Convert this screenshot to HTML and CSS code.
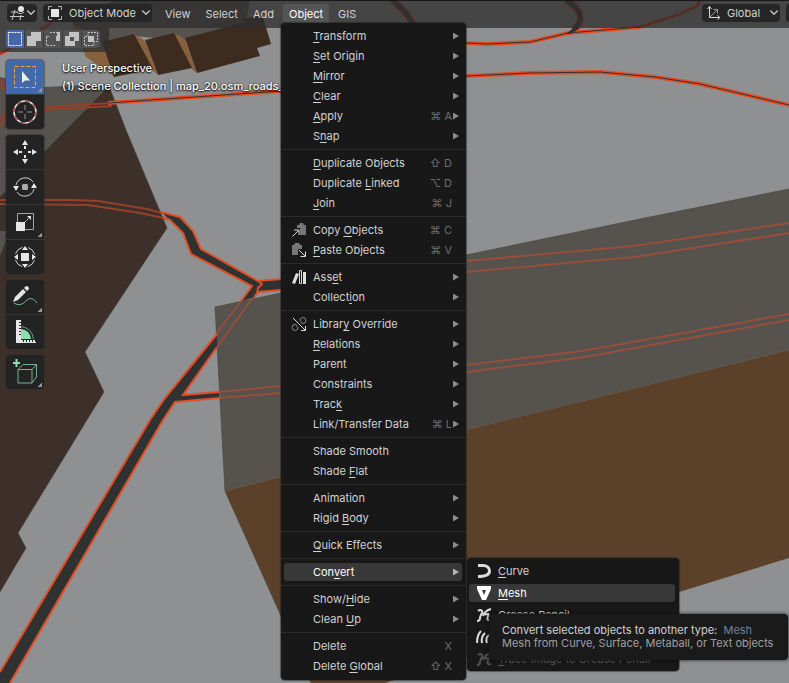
FILE: index.html
```html
<!DOCTYPE html>
<html lang="en">
<head>
<meta charset="utf-8">
<title>3D Viewport</title>
<link rel="stylesheet" href="styles.css">
</head>
<body>
<svg class="scene" viewBox="0 0 789 683" preserveAspectRatio="xMinYMin slice" aria-hidden="true">
  <!-- buildings -->
  <path fill="#56524d" d="M0 77 44 87 109 84V90L0 200ZM72 23 115 0H250L246 22 185 41 134 36 103 46Z"/>
  <path fill="#3d302a" d="M109 86 126 130 167 228 85 352 104 392 18 533 26 548 0 592V197Z"/>
  <path fill="#56524d" d="M0 231H10L0 256Z"/>
  <path fill="#87603c" d="M72 23 103 42 116 77 86 57ZM134 34 145 41 158 75 150 68ZM174 33 185 39 197 73 189 67Z"/>
  <path fill="#3d2b20" d="M102 42 134 34 153 69 114 77ZM145 40 174 33 192 68 158 75ZM185 38 246 22 240 20 262 14 271 44 257 48 260 56 197 73Z"/>
  <path fill="#56524d" d="M215 307 281 293 466 255 640 219 789 189V350L466 430 225 491Z"/>
  <path fill="#5c412a" d="M225 491 466 430 789 350V558L385 683H311L281 616Z"/>
  <path fill="none" stroke="#454340" stroke-opacity=".6" d="M225 491 215 307 281 293 466 255 640 219 789 189M225 491 281 616 311 683M109 86 126 130 167 228 85 352 104 392 18 533 26 548 0 592"/>
  <!-- roads seen through buildings -->
  <g fill="none" stroke="#a34e3b" stroke-width="2">
    <path d="M466 261 634 246 789 223M466 272 634 257 789 233M466 365 582 351 789 314M466 372 585 357 789 320" opacity=".85"/>
    <path d="M219 392 281 386M219 398 281 393M241 301 216 334M254 296 217 347" opacity=".85"/>
  </g>
  <g fill="none" stroke="#963f29" stroke-width="2">
    <path d="M0 200H75L98 201 147 209 162 213M0 204 88 205 140 213 168 219"/>
    <path d="M44 107 112 103M44 110 112 106M0 80 6 86M0 85 6 91M0 120 6 112M0 126 6 118"/>
  </g>
  <!-- road surfaces -->
  <path fill="#303232" d="M161 212 180 217 193 231 201 249 258 281 281 279V290L258 292 255 297 242 301 252 287 191 254 183 233 170 220Z"/>
  <path fill="#303232" d="M217 334 165 398 150 420 0 672V683H10L163 420 175 402 219 398V392L183 395 217 347Z"/>
  <g fill="none" stroke="#e34d26" stroke-width="2">
    <path d="M161 212 180 217 193 231 201 249 258 281 281 279M163 217 170 220 183 233 191 254 252 286 241 301M254 297 258 292 281 290M258 281 262 284 258 288 257 293"/>
    <path d="M217 334 165 398 150 420 0 672M10 683 163 420 175 402 219 398M219 392 183 395 217 347"/>
  </g>
  <g fill="none" stroke="#e34d26" stroke-width="4">
    <path d="M108 103 281 91M466 76 530 73 600 72 655 77 700 84 789 105M466 43 487 44 530 42 568 33 640 27 680 14 697 6 700 0M0 54 20 42 47 26 62 14"/>
  </g>
  <path fill="none" stroke="#e34d26" stroke-width="8" d="M392 0C400 7 410 14 414 28M566 0C580 8 586 20 574 29"/>
  <path fill="none" stroke="#303232" stroke-width="5" d="M392 0C400 7 410 14 414 28M566 0C580 8 586 20 573 30"/>
  <path fill="#303232" d="M566 34 576 26 580 28 570 34Z"/>
  <g fill="none" stroke="#303232">
    <path d="M108 103 281 91M466 76 530 73 600 72 655 77 700 84 789 105M466 43 487 44 530 42 568 33 640 27 680 14 697 6 700 0M0 54 20 42 47 26 62 14"/>
  </g>
</svg>

<header class="topbar">
  <button class="field editor" aria-label="Editor type">
    <svg width="16" height="16" viewBox="0 0 16 16" fill="none" stroke="#c8c8c8" stroke-width="1"><path d="M1 7H8M0 11.500H14M5 5 2 15M11 10 10 15"/><circle cx="11" cy="4" r="3" fill="#e6e6e6" stroke="none"/><path d="M7 7C8 9 12 9 14 7"/></svg>
    <svg class="chev" viewBox="0 0 8 8"><path d="M1 2 4 5 7 2"/></svg>
  </button>
  <label class="field mode">
    <svg width="16" height="16" viewBox="0 0 16 16" fill="none" stroke="#b4b4b4"><path d="M1.500 5V1.500H5M11 1.500H14.500V5M14.500 11V14.500H11M5 14.500H1.500V11"/><path d="M4 4H12V12H4Z" fill="#e6e6e6" stroke="none"/></svg>
    <select aria-label="Mode"><option>Object Mode</option></select>
    <svg class="chev" viewBox="0 0 8 8"><path d="M1 2 4 5 7 2"/></svg>
  </label>
  <nav class="menubar">
    <button>View</button>
    <button>Select</button>
    <button>Add</button>
    <div class="open">
      <button class="active" aria-expanded="true">Object</button>
      <ul class="menu main">
        <li><button><span class="t"><u>T</u>ransform</span><i class="arrow"></i></button></li>
        <li><button><span class="t"><u>S</u>et Origin</span><i class="arrow"></i></button></li>
        <li><button><span class="t"><u>M</u>irror</span><i class="arrow"></i></button></li>
        <li><button><span class="t"><u>C</u>lear</span><i class="arrow"></i></button></li>
        <li><button><span class="t"><u>A</u>pply</span><kbd>⌘ A</kbd><i class="arrow"></i></button></li>
        <li><button><span class="t">S<u>n</u>ap</span><i class="arrow"></i></button></li>
        <li class="sep"></li>
        <li><button><span class="t"><u>D</u>uplicate Objects</span><kbd>⇧ D</kbd></button></li>
        <li><button><span class="t">Duplicate <u>L</u>inked</span><kbd>⌥ D</kbd></button></li>
        <li><button><span class="t"><u>J</u>oin</span><kbd>⌘ J</kbd></button></li>
        <li class="sep"></li>
        <li><button><svg class="ic" viewBox="0 0 14 14"><path fill="#777" d="M5 2H7L8 0H11L12 2H14V12H8V5H5Z"/><path fill="none" stroke="#dcdcdc" d="M0.500 13.500 6.500 7.500M2 7H7V12"/></svg><span class="t">Copy <u>O</u>bjects</span><kbd>⌘ C</kbd></button></li>
        <li><button><svg class="ic" viewBox="0 0 14 14"><path fill="#777" d="M0 2H2L3 0H7L8 2H10V6H6V12H0Z"/><path fill="none" stroke="#dcdcdc" d="M7 7 13 13M8.500 13.500H13.500V8.500"/></svg><span class="t"><u>P</u>aste Objects</span><kbd>⌘ V</kbd></button></li>
        <li class="sep"></li>
        <li><button><svg class="ic" viewBox="0 0 14 14"><path fill="#dcdcdc" d="M4 3 7 4 3 14 0 13ZM11 2H14V14H11Z"/><path fill="none" stroke="#dcdcdc" d="M7.500 .500H9.500V13.500H7.500Z"/></svg><span class="t">Ass<u>e</u>t</span><i class="arrow"></i></button></li>
        <li><button><span class="t">Collect<u>i</u>on</span><i class="arrow"></i></button></li>
        <li class="sep"></li>
        <li><button><svg class="ic" viewBox="0 0 14 14"><g fill="none" stroke="#8c8c8c"><path d="M8 4A3 3 0 1 1 11 6.500C9 6.500 8.500 5 10 4M6 10A3 3 0 1 1 3 7.500C5 7.500 5.500 9 4 10"/></g><path fill="none" stroke="#dcdcdc" d="M1 1 13 13M9 13.500H13.500V9"/></svg><span class="t">Librar<u>y</u> Override</span><i class="arrow"></i></button></li>
        <li><button><span class="t"><u>R</u>elations</span><i class="arrow"></i></button></li>
        <li><button><span class="t">Parent</span><i class="arrow"></i></button></li>
        <li><button><span class="t">Constraints</span><i class="arrow"></i></button></li>
        <li><button><span class="t">Trac<u>k</u></span><i class="arrow"></i></button></li>
        <li><button><span class="t">Link/Transfer Data</span><kbd>⌘ L</kbd><i class="arrow"></i></button></li>
        <li class="sep"></li>
        <li><button><span class="t">Shade Smooth</span></button></li>
        <li><button><span class="t">Shade <u>F</u>lat</span></button></li>
        <li class="sep"></li>
        <li><button><span class="t">Animation</span><i class="arrow"></i></button></li>
        <li><button><span class="t">Rigid <u>B</u>ody</span><i class="arrow"></i></button></li>
        <li class="sep"></li>
        <li><button><span class="t"><u>Q</u>uick Effects</span><i class="arrow"></i></button></li>
        <li class="sep"></li>
        <li class="parent"><button class="hot"><span class="t">Con<u>v</u>ert</span><i class="arrow"></i></button>
          <ul class="menu sub">
            <li><button><svg class="ic" viewBox="0 0 14 14"><path fill="none" stroke="#dcdcdc" stroke-width="3" d="M1 1.500H6C10 1.500 12.500 4 12.500 7 12.500 11 9 12.500 1 12.500"/></svg><span class="t"><u>C</u>urve</span></button></li>
            <li class="parent"><button class="hot"><svg class="ic" viewBox="0 0 14 14"><path fill="#fff" fill-rule="evenodd" d="M0 0H14V3L9 14H5L0 3ZM5 4 7 9 9 4Z"/></svg><span class="t"><u>M</u>esh</span></button>
              <div class="tip" role="tooltip">
                <p>Convert selected objects to another type: &nbsp;<b>Mesh</b></p>
                <p class="desc">Mesh from Curve, Surface, Metaball, or Text objects</p>
              </div>
            </li>
            <li><button><svg class="ic" viewBox="0 0 14 14"><path fill="none" stroke="#dcdcdc" stroke-width="2" d="M1 3C3 1 6 2 5 5 4 7 3 8 3 10 3 12 2 13 0 13M6 8C7 5 10 2 14 1M8 7C11 5 12 6 11 8 10 11 10 13 14 12"/></svg><span class="t"><u>G</u>rease Pencil</span></button></li>
            <li><button aria-label="Curves"><svg class="ic" viewBox="0 0 14 14"><path fill="none" stroke="#dcdcdc" stroke-width="2" d="M4 1C1 4 0 8 0 13M8 3C5 6 4 9 5 13M12 5C9 7 9 10 10 13"/></svg></button></li>
            <li><button disabled><svg class="ic" viewBox="0 0 14 14"><path fill="none" stroke="#505050" stroke-width="2" d="M1 3C3 1 6 2 5 5 4 7 3 8 3 10 3 12 2 13 0 13M6 8C7 5 10 2 14 1M8 7C11 5 12 6 11 8 10 11 10 13 14 12"/></svg><span class="t"><u>T</u>race Image to Grease Pencil</span></button></li>
          </ul>
        </li>
        <li class="sep"></li>
        <li><button><span class="t">Show/<u>H</u>ide</span><i class="arrow"></i></button></li>
        <li><button><span class="t">Clean <u>U</u>p</span><i class="arrow"></i></button></li>
        <li class="sep"></li>
        <li><button><span class="t">Delete</span><kbd>X</kbd></button></li>
        <li><button><span class="t">Delete <u>G</u>lobal</span><kbd>⇧ X</kbd></button></li>
      </ul>
    </div>
    <button>GIS</button>
  </nav>
  <label class="field orient">
    <svg width="16" height="16" viewBox="0 0 16 16" fill="none" stroke="#dcdcdc"><path d="M3.500 2V12.500H13M1.500 4 3.500 1.500 5.500 4M11.500 10.500 14 12.500 11.500 14.500"/><path stroke="#999" d="M4 12 11 5M7.500 4.500H11.500V8.500"/></svg>
    <select aria-label="Transform orientation"><option>Global</option></select>
    <svg class="chev" viewBox="0 0 8 8"><path d="M1 2 4 5 7 2"/></svg>
  </label>
  <button class="field edge" aria-label="Pivot point"></button>
</header>

<div class="modes">
  <div class="group">
    <button class="on" aria-label="Set selection"><svg viewBox="0 0 16 16"><path fill="none" stroke="#fff" stroke-dasharray="2 1" d="M1.500 1.500H14.500V14.500H1.500Z"/></svg></button>
    <button aria-label="Extend selection"><svg viewBox="0 0 16 16"><path fill="#c2c2c2" d="M5 1H15V10H10V15H1V5H5Z"/></svg></button>
    <button aria-label="Subtract selection"><svg viewBox="0 0 16 16"><path fill="none" stroke="#c2c2c2" stroke-dasharray="2 1" d="M5 1.500H14.500M1.500 6V14.500H10M1.500 5.500H5"/><path fill="#c2c2c2" d="M12 1H15V10H11V5H12Z"/></svg></button>
    <button aria-label="Invert selection"><svg viewBox="0 0 16 16"><path fill="#c2c2c2" fill-rule="evenodd" d="M5 1H15V10H11V15H1V5H5ZM6 6V10H10V6Z"/></svg></button>
    <button aria-label="Intersect selection"><svg viewBox="0 0 16 16"><path fill="none" stroke="#c2c2c2" stroke-dasharray="2 1" d="M5 1.500H14.500V10.500H11V14.500H1.500V5.500H5Z"/><path fill="#c2c2c2" d="M5 5H11V11H5Z"/></svg></button>
  </div>
</div>

<main class="view">
  <aside class="tools">
    <div class="group">
      <button class="on more" aria-label="Select box"><svg viewBox="0 0 24 24"><path fill="none" stroke="#f5a531" stroke-width="1" stroke-dasharray="4 2" d="M1.500 1.500H22.500V22.500H1.500Z"/><path fill="#ededed" d="M9 6V18L12 15.500 17 15.500Z"/></svg></button>
      <button aria-label="Cursor"><svg viewBox="0 0 24 24"><circle cx="12" cy="12" r="11" fill="none" stroke="#e6e6e6" stroke-width="1.500"/><circle cx="12" cy="12" r="11" fill="none" stroke="#a8464b" stroke-width="1.500" stroke-dasharray="4.600 4"/><path stroke="#969696" d="M12 5V10M12 14V19M5 12H10M14 12H19"/></svg></button>
    </div>
    <div class="group">
      <button aria-label="Move"><svg viewBox="0 0 24 24"><path fill="#e6e6e6" d="M12 0 15 5H9ZM12 24 9 19H15ZM0 12 5 9V15ZM24 12 19 15V9Z"/><path stroke="#e6e6e6" stroke-width="2" d="M12 6V9M12 15V18M6 12H9M15 12H18"/></svg></button>
      <button aria-label="Rotate"><svg viewBox="0 0 24 24"><path fill="none" stroke="#d2d2d2" stroke-width="1" d="M3 10A9.500 9.500 0 0 1 20 7M21 14A9.500 9.500 0 0 1 4 17"/><path fill="#e6e6e6" d="M0 11H6L3 16ZM18 13H24L21 8Z"/><path fill="#aaa" d="M10 9H14L15 10V14L14 15H10L9 14V10Z"/></svg></button>
      <button class="more" aria-label="Scale"><svg viewBox="0 0 24 24"><path fill="none" stroke="#a5a5a5" stroke-width="1" d="M4.500 12V3.500H20.500V19.500H12"/><path fill="#e6e6e6" d="M3 12H12V21H3ZM18 6V10L14 6Z"/><path stroke="#e6e6e6" stroke-dasharray="2 1" d="M12 12 17 7"/></svg></button>
      <button aria-label="Transform"><svg viewBox="0 0 24 24"><circle cx="12" cy="12" r="10" fill="none" stroke="#d2d2d2" stroke-width="1" stroke-dasharray="9.700 6" stroke-dashoffset="-3"/><path fill="#e6e6e6" d="M8 8H16V16H8ZM12 1 15 5H9ZM12 23 9 19H15ZM1 12 5 9V15ZM23 12 19 15V9Z"/></svg></button>
    </div>
    <div class="group">
      <button class="more" aria-label="Annotate"><svg viewBox="0 0 24 24"><path fill="#e6e6e6" d="M0 17 2 12 10 4 13 7 5 15ZM11 3 13 1Q16 1 16 4L14 6Z"/><path fill="none" stroke="#70bd96" stroke-width="1" d="M1 18C7 22 11 18 14 15 18 12 21 14 24 18"/></svg></button>
      <button aria-label="Measure"><svg viewBox="0 0 24 24"><path fill="#8edcb1" d="M8 9Q17 10 18 19H8Z"/><path fill="none" stroke="#5fa57d" d="M8 6.500Q19 8 20.500 19"/><path fill="#e6e6e6" d="M3 0H8V2H6V3H8V5H6V6H8V8H6V9H8V11H6V12H8V14H6V15H8V20H10V22H11V20H13V22H14V20H16V22H17V20H19V22H20V20H22V22H23V23H3Z"/></svg></button>
    </div>
    <div class="group">
      <button class="more" aria-label="Add cube"><svg viewBox="0 0 24 24"><path fill="none" stroke="#72b291" d="M5 9.500H19V23H5ZM5 9.500 10 4.500H23.500L19 9.500M23.500 4.500V17L19 23"/><path stroke="#8edcb1" stroke-width="2" d="M0 3H7M3.500 -1V7"/></svg></button>
    </div>
  </aside>
  <div class="info">
    <p>User Perspective</p>
    <p>(1) Scene Collection | map_20.osm_roads_</p>
  </div>
</main>
</body>
</html>
```

FILE: styles.css
```css
* { box-sizing: border-box; }

body {
  margin: 0;
  min-height: 100vh;
  overflow: hidden;
  background: #8e9092;
  color: #d2d2d2;
  font: 11px/18px Inter, "Noto Sans", sans-serif;
}

button, select {
  margin: 0;
  padding: 0;
  border: 0;
  background: none;
  color: inherit;
  font: inherit;
}

ul, p { margin: 0; padding: 0; list-style: none; }
svg { display: block; flex: none; overflow: visible; }

.scene {
  position: absolute;
  inset: 0;
  width: 100%;
  height: 100vh;
  overflow: hidden;
}

/* header */
.topbar {
  position: relative;
  z-index: 2;
  display: flex;
  align-items: flex-start;
  height: 28px;
  padding: 3px 0 0 7px;
  border-top: 1px solid #18181a;
  background: rgba(46, 46, 46, .76);
}

.field {
  display: flex;
  align-items: center;
  height: 18px;
  border-radius: 4px;
  background: #262626;
}
.field select { appearance: none; outline: 0; }

.chev {
  width: 10px;
  height: 10px;
  fill: none;
  stroke: #c8c8c8;
}

.editor { width: 30px; padding: 0 1px 0 3px; }
.mode { margin-left: 6px; padding: 0 1px 0 4px; gap: 6px; width: 109px; }
.orient { margin-left: auto; padding: 0 1px 0 4px; gap: 5px; width: 78px; }
.mode select, .orient select { flex: 1; min-width: 0; margin-right: -4px; }
.edge { width: 3px; margin-left: 6px; border-radius: 4px 0 0 4px; }

.menubar { display: flex; margin-left: 7px; }
.menubar > button, .open > button {
  height: 19px;
  padding: 0 6px;
  margin-right: 3px;
}
.menubar .active {
  background: #555;
  color: #fff;
  border-radius: 3px 3px 0 0;
}
.open { position: relative; }

/* menus */
.menu {
  position: absolute;
  padding: 3px 0 4px;
  border-radius: 4px;
  background: #181818;
  box-shadow: 0 0 1px 1px rgba(30, 30, 30, .5);
}
.main { top: 19px; left: -2px; width: 185px; }

.menu button {
  display: flex;
  align-items: center;
  width: calc(100% - 7px);
  height: 18px;
  margin: 1px 4px 1px 3px;
  padding-left: 29px;
  border-radius: 3px;
  white-space: nowrap;
  text-align: left;
}
.menu li { display: flow-root; }
.menu .ic { width: 14px; height: 14px; margin: 0 7px 0 -21px; }
.menu .t { flex: 1; }
.menu .hot { background: #383838; color: #fff; }
.menu button:disabled { color: #5a5a5a; }
.menu u { text-underline-offset: 2px; text-decoration-thickness: 1px; text-decoration-skip-ink: none; }

.menu .sep { height: 7px; padding: 3px 0; background: #2b2b2b content-box; }

kbd { margin-right: 10px; color: #6e6e6e; font: inherit; }
kbd:has(+ .arrow) { margin-right: 1px; }

.arrow {
  width: 6px;
  height: 7px;
  margin-right: 3px;
  background: #8c8c8c;
  clip-path: polygon(0 0, 100% 50%, 0 100%);
}
.hot .arrow { background: #b4b4b4; }

.parent { position: relative; }
.menu.sub { top: -4px; left: 186px; width: 212px; padding: 2px 0 1px; }
.sub button { margin: 2px 4px 2px 2px; width: calc(100% - 6px); }

.tip {
  position: absolute;
  top: 32px;
  left: 22px;
  padding: 10px 15px 10px 13px;
  border-radius: 4px;
  background: #1a1a1a;
  box-shadow: 0 0 3px 1px rgba(10, 10, 10, .5);
  line-height: 13px;
  white-space: nowrap;
}
.tip b { color: #7080a0; font-weight: 400; }
.tip .desc { color: #a0a0a0; }

/* selection mode strip */
.modes {
  position: relative;
  width: 109px;
  height: 24px;
  padding: 2px 0 0 6px;
  border-radius: 0 0 5px;
  background: rgba(46, 46, 46, .76);
}
.modes .group {
  display: flex;
  gap: 1px;
  width: 94px;
  overflow: hidden;
  border-radius: 4px;
  background: #3c3c3c;
}
.modes button { flex: 1; height: 18px; padding: 1px; background: #535353; }
.modes button svg { width: 16px; height: 16px; }
.modes button.on { background: #4469a8; }

/* viewport */
.view { position: relative; display: flex; gap: 18px; padding-left: 6px; }

.tools {
  display: flex;
  flex-direction: column;
  gap: 6px;
  width: 38px;
  padding-top: 8px;
}
.tools .group {
  display: flex;
  flex-direction: column;
  gap: 1px;
  overflow: hidden;
  border-radius: 4px;
  background: #383838;
  box-shadow: 0 0 1px 1px rgba(45, 45, 45, .5);
}
.tools button {
  display: grid;
  place-items: center;
  height: 34px;
  background-color: #232323;
}
.tools button.on { background-color: #4469a8; }
.tools button svg { width: 24px; height: 24px; }
.tools .more {
  background-image: linear-gradient(135deg, transparent 50%, #969696 50%);
  background-size: 4px 4px;
  background-repeat: no-repeat;
  background-position: calc(100% - 2px) calc(100% - 2px);
}

.info {
  padding-top: 7px;
  color: #fff;
  font-weight: 500;
  text-shadow: 0 1px 2px #000, 0 0 2px rgba(0, 0, 0, .7);
  white-space: nowrap;
}
```
